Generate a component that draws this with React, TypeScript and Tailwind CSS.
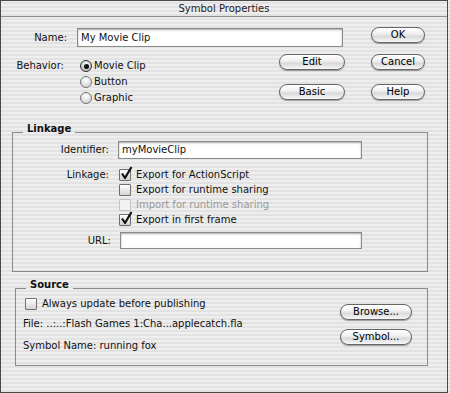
import React from "react";

function AquaButton({ label, className }: { label: string; className: string }) {
  return (
    <div
      className={`flex h-[16px] items-center justify-center rounded-full border border-[#666] bg-[linear-gradient(to_bottom,#ffffff_0%,#f1f1f1_40%,#dadada_60%,#f7f7f7_100%)] text-[10px] leading-none text-black shadow-[0_1px_1px_rgba(0,0,0,0.35)] ${className}`}
    >
      {label}
    </div>
  );
}

function Radio({ label, checked }: { label: string; checked?: boolean }) {
  return (
    <div className="flex h-[16px] items-center gap-[2px]">
      <div
        className={`flex h-[12px] w-[12px] items-center justify-center rounded-full border ${
          checked
            ? "border-[#333] bg-[radial-gradient(circle_at_50%_35%,#ffffff,#a8a8a8)]"
            : "border-[#777] bg-[radial-gradient(circle_at_50%_30%,#ffffff,#c9c9c9)]"
        }`}
      >
        {checked && <div className="h-[5px] w-[5px] rounded-full bg-[#111]" />}
      </div>
      <span>{label}</span>
    </div>
  );
}

function Check({
  label,
  checked,
  disabled,
  className = "h-[15px]",
}: {
  label: string;
  checked?: boolean;
  disabled?: boolean;
  className?: string;
}) {
  return (
    <div className={`flex items-center gap-[5px] ${className} ${disabled ? "text-[#9a9a9a]" : ""}`}>
      <div
        className={`relative h-[12px] w-[12px] shrink-0 rounded-[1px] border ${
          disabled
            ? "border-[#c4c4c4] bg-[#f2f2f2]"
            : "border-[#6e6e6e] bg-[linear-gradient(to_bottom,#ffffff,#d4d4d4)]"
        }`}
      >
        {checked && (
          <svg className="absolute left-[0px] top-[-4px]" width="13" height="14" viewBox="0 0 13 14">
            <path d="M2 7.5 L5 12 L11.5 1" fill="none" stroke="#111" strokeWidth="2.2" strokeLinejoin="round" />
          </svg>
        )}
      </div>
      <span>{label}</span>
    </div>
  );
}

function TextField({ value, className }: { value: string; className: string }) {
  return (
    <div
      className={`flex items-center border border-[#8a8a8a] bg-white pl-[3px] shadow-[inset_0_1px_2px_rgba(0,0,0,0.35)] ${className}`}
    >
      {value}
    </div>
  );
}

export default function App() {
  return (
    <div className="h-[393px] w-[450px] bg-[repeating-linear-gradient(to_bottom,#eeeeee_0px,#eeeeee_2px,#e2e2e2_2px,#e2e2e2_4px)] font-['DejaVu_Sans',sans-serif] text-[10px] leading-[12px] text-[#111]">
      <div className="flex h-[393px] w-[448px] flex-col border border-[#4a4a4a]">
        {/* title bar */}
        <div className="flex h-[16px] items-center justify-center border-b border-[#8c8c8c] text-[#222]">
          Symbol Properties
        </div>

        {/* top area */}
        <div className="flex items-start">
          <div className="flex w-[344px] flex-col">
            <div className="mt-[11px] flex h-[19px] items-center">
              <span className="w-[66px] text-right">Name:</span>
              <TextField value="My Movie Clip" className="ml-[10px] h-[19px] w-[266px]" />
            </div>
            <div className="mt-[7px] flex items-start">
              <span className="mt-[6px] w-[63px] text-right">Behavior:</span>
              <div className="ml-[16px] mt-[4px] flex flex-col">
                <Radio label="Movie Clip" checked />
                <Radio label="Button" />
                <Radio label="Graphic" />
              </div>
              <div className="ml-auto flex flex-col">
                <AquaButton label="Edit" className="w-[66px]" />
                <AquaButton label="Basic" className="mt-[14px] w-[66px]" />
              </div>
            </div>
          </div>
          <div className="ml-[26px] flex flex-col">
            <AquaButton label="OK" className="mt-[10px] w-[54px] border-[#444]" />
            <AquaButton label="Cancel" className="mt-[11px] w-[54px]" />
            <AquaButton label="Help" className="mt-[14px] w-[54px]" />
          </div>
        </div>

        {/* Linkage */}
        <fieldset className="ml-[11px] mt-[17px] w-[416px] border border-[#8a8a8a] px-[10px] pb-[22px]">
          <legend className="px-[4px] pb-[6px] font-bold leading-[12px]">Linkage</legend>
          <div className="-mx-[10px] flex flex-col">
            <div className="flex h-[18px] items-center">
              <span className="w-[96px] text-right">Identifier:</span>
              <TextField value="myMovieClip" className="ml-[9px] h-[18px] w-[244px]" />
            </div>
            <div className="mt-[8px] flex items-start">
              <span className="w-[96px] text-right leading-[15px]">Linkage:</span>
              <div className="ml-[10px] flex flex-col">
                <Check label="Export for ActionScript" checked />
                <Check label="Export for runtime sharing" />
                <Check label="Import for runtime sharing" disabled />
                <Check label="Export in first frame" checked />
              </div>
            </div>
            <div className="mt-[5px] flex h-[17px] items-center">
              <span className="w-[98px] text-right">URL:</span>
              <TextField value="" className="ml-[9px] h-[17px] w-[242px]" />
            </div>
          </div>
        </fieldset>

        {/* Source */}
        <fieldset className="ml-[14px] mt-[7px] w-[413px] border border-[#8a8a8a] px-[10px] pb-[13px]">
          <legend className="px-[4px] pb-[6px] font-bold leading-[12px]">Source</legend>
          <div className="-mx-[10px] flex items-start pl-[7px] pr-[15px]">
            <div className="flex flex-col">
              <Check label="Always update before publishing" className="ml-[2px] h-[13px] gap-[2px]" />
              <span className="mt-[8px]">File: ..:..:Flash Games 1:Cha...applecatch.fla</span>
              <span className="mt-[10px]">Symbol Name: running fox</span>
            </div>
            <div className="ml-auto flex flex-col">
              <AquaButton label="Browse..." className="mt-[7px] w-[72px]" />
              <AquaButton label="Symbol..." className="mt-[9px] w-[72px]" />
            </div>
          </div>
        </fieldset>
      </div>
    </div>
  );
}
